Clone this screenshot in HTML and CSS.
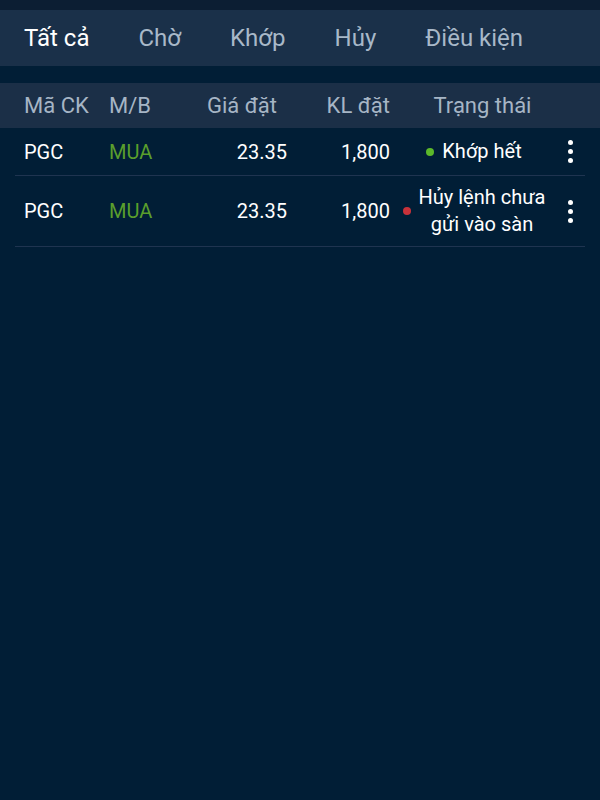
FILE: index.html
```html
<!DOCTYPE html>
<html>

<head>
    <meta charset="utf-8">
    <link rel="stylesheet" href="styles.css">
</head>

<body>
    <div class="top-strip"></div>

    <nav class="tabs">
        <span class="tab active">Tất cả</span>
        <span class="tab">Chờ</span>
        <span class="tab">Khớp</span>
        <span class="tab">Hủy</span>
        <span class="tab">Điều kiện</span>
    </nav>

    <div class="table-head">
        <div class="grid">
            <span>Mã CK</span>
            <span>M/B</span>
            <span class="num price-head">Giá đặt</span>
            <span class="num">KL đặt</span>
            <span class="status">Trạng thái</span>
            <span></span>
        </div>
    </div>

    <div class="orders">
        <div class="grid order">
            <span>PGC</span>
            <span class="buy">MUA</span>
            <span class="num">23.35</span>
            <span class="num">1,800</span>
            <span class="status"><i class="dot green"></i>Khớp hết</span>
            <span class="kebab"><i></i><i></i><i></i></span>
        </div>
        <div class="grid order">
            <span>PGC</span>
            <span class="buy">MUA</span>
            <span class="num">23.35</span>
            <span class="num">1,800</span>
            <span class="status"><i class="dot red"></i>Hủy lệnh chưa<br>gửi vào sàn</span>
            <span class="kebab"><i></i><i></i><i></i></span>
        </div>
    </div>
</body>

</html>
```

FILE: styles.css
```css
body {
    margin: 0;
    background: #011e36;
    font-family: Roboto, 'Noto Sans', sans-serif;
    color: #ffffff;
}

.top-strip {
    height: 10px;
    background: #0c1e33;
}

.tabs {
    display: flex;
    align-items: center;
    gap: 49px;
    height: 56px;
    padding-left: 24px;
    background: #1a3049;
}

.tab {
    font-size: 24px;
    color: #a8b8c8;
}

.tab.active {
    color: #ffffff;
}

.table-head {
    margin-top: 17px;
    background: #1b2f47;
    color: #a6b5c5;
}

.table-head .grid {
    height: 45px;
    font-size: 22px;
}

.table-head .status {
    padding-left: 12px;
    padding-right: 0;
}

.grid {
    display: grid;
    grid-template-columns: 85px 81px 97px 103px 1fr 14px;
    align-items: center;
    margin: 0 15px;
    padding: 0 8px 0 9px;
    font-size: 20px;
}

.num {
    text-align: right;
}

.price-head {
    padding-right: 10px;
}

.status {
    display: flex;
    align-items: center;
    justify-content: center;
    padding-right: 5px;
    text-align: center;
    line-height: 27px;
}

.order {
    min-height: 48px;
    padding-top: 8px;
    padding-bottom: 8px;
    box-sizing: border-box;
    border-bottom: 1px solid #1f3450;
}

.buy {
    color: #5a9e2c;
}

.dot {
    width: 8px;
    height: 8px;
    border-radius: 50%;
    margin-right: 8px;
}

.dot.green {
    background: #5cb82a;
}

.dot.red {
    background: #c8323a;
}

.kebab {
    display: flex;
    flex-direction: column;
    align-items: center;
    gap: 4px;
}

.kebab i {
    width: 5px;
    height: 5px;
    border-radius: 50%;
    background: #ffffff;
}
```
